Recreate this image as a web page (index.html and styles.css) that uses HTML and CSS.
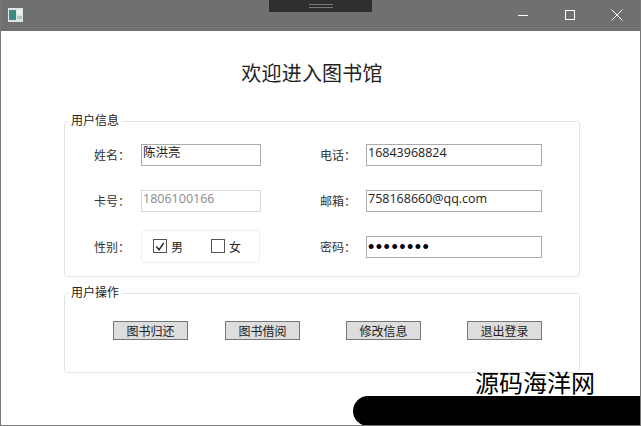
FILE: index.html
```html
<!DOCTYPE html>
<html lang="zh-CN">
<head>
<meta charset="utf-8">
<title>欢迎进入图书馆</title>
<link rel="stylesheet" href="styles.css">
</head>
<body>
<div class="window">
  <header class="titlebar">
    <svg class="app-icon" width="15" height="14" viewBox="0 0 15 14"><rect width="15" height="14" fill="#dfe6e4"/><rect x="1" y="2" width="7" height="10" fill="#3f8a80"/><rect x="9" y="2" width="5" height="4" fill="#f2f2f2"/><rect x="9" y="8" width="5" height="3" fill="#b9c4c2"/></svg>
    <div class="grip"><span class="grip-lines"></span></div>
    <div class="controls">
      <svg width="12" height="12" viewBox="0 0 12 12"><path d="M1 6.5h10" stroke="#fff" stroke-width="1"/></svg>
      <svg width="12" height="12" viewBox="0 0 12 12"><rect x="1.5" y="1.5" width="9" height="9" fill="none" stroke="#fff" stroke-width="1"/></svg>
      <svg width="12" height="12" viewBox="0 0 12 12"><path d="M.5.5l11 11M11.500.5l-11 11" stroke="#fff" stroke-width="1"/></svg>
    </div>
  </header>
  <main class="content">
    <h1 class="title">欢迎进入图书馆</h1>
    <fieldset class="group info">
      <legend>用户信息</legend>
      <div class="form">
        <div class="row">
          <label class="lbl">姓名：</label><div class="input">陈洪亮</div>
          <label class="lbl lbl-r">电话：</label><div class="input wide">16843968824</div>
        </div>
        <div class="row">
          <label class="lbl">卡号：</label><div class="input disabled">1806100166</div>
          <label class="lbl lbl-r">邮箱：</label><div class="input wide">758168660@qq.com</div>
        </div>
        <div class="row">
          <label class="lbl">性别：</label>
          <div class="gender">
            <span class="check"><span class="box"><svg width="13" height="13" viewBox="0 0 13 13"><path d="M2.500 6.500l3 3.500 5-7.500" fill="none" stroke="#222" stroke-width="1.500"/></svg></span>男</span>
            <span class="check"><span class="box"></span>女</span>
          </div>
          <label class="lbl lbl-r">密码：</label><div class="input wide pass">••••••••</div>
        </div>
      </div>
    </fieldset>
    <fieldset class="group ops">
      <legend>用户操作</legend>
      <div class="actions">
        <button class="btn">图书归还</button>
        <button class="btn">图书借阅</button>
        <button class="btn far">修改信息</button>
        <button class="btn far">退出登录</button>
      </div>
    </fieldset>
  </main>
  <div class="mask"></div>
  <div class="watermark">源码海洋网</div>
</div>
</body>
</html>
```
FILE: styles.css
```css
* { box-sizing: border-box; }
html, body { margin: 0; padding: 0; background: #fff; }
body { width: 641px; height: 426px; overflow: hidden; font-family: "Open Sans", "Noto Sans CJK SC", sans-serif; font-size: 12px; color: #222; }
.window { position: relative; width: 641px; height: 426px; display: flex; flex-direction: column; border: 1px solid #777; border-top: 0; overflow: hidden; }
.titlebar { height: 31px; flex: none; background: #707070; position: relative; display: flex; align-items: center; justify-content: space-between; padding: 0 0 0 8px; margin: 0 -1px; }
.app-icon { margin-top: -1px; }
.grip { position: absolute; left: 269px; top: 0; width: 103px; height: 12px; background: #2f2f2f; display: flex; justify-content: center; align-items: center; }
.grip-lines { width: 24px; height: 4px; border-top: 1px solid #777; border-bottom: 1px solid #777; }
.controls { display: flex; gap: 35px; padding-right: 18px; margin-top: -1px; }
.content { flex: 1; padding: 0 0 0 63px; }
.title { margin: 28px 0 0; width: 496px; font-size: 20px; font-weight: 400; line-height: 28px; text-align: center; letter-spacing: .2px; font-family: "Noto Sans CJK SC", sans-serif; color: #222; }
.group { width: 516px; margin: 0; padding: 0; border: 1px solid #e4e4e4; border-radius: 3px; }
.group legend { margin-left: 3px; padding: 0 3px 2px; font-size: 12px; line-height: 14px; font-family: "Noto Sans CJK SC", sans-serif; color: #222; }
.info { height: 164px; margin-top: 26px; }
.ops { height: 88px; margin-top: 8px; }
.form { display: flex; flex-direction: column; gap: 24px; padding: 15px 0 0 29px; }
.row { display: flex; align-items: center; height: 22px; }
.lbl { width: 47px; flex: none; margin-bottom: 2px; font-family: "Noto Sans CJK SC", sans-serif; color: #333; }
.lbl-r { width: 46px; margin-left: 59px; }
.input { width: 120px; height: 22px; border: 1px solid #ababab; padding: 0 1px; font-size: 12.500px; line-height: 16px; white-space: nowrap; }
.wide { width: 176px; }
.disabled { border-color: #d9d9d9; color: #8a8a8a; }
.pass { font-size: 18px; line-height: 20px; letter-spacing: 1.500px; color: #000; font-family: "Liberation Sans", sans-serif; }
.gender { width: 119px; height: 33px; margin: 0 1px 2px 0; border: 1px solid #eee; border-radius: 4px; display: flex; align-items: center; padding-left: 11px; gap: 19px; font-family: "Noto Sans CJK SC", sans-serif; }
.check { display: flex; align-items: center; gap: 4px; width: 39px; }
.box { width: 14px; height: 14px; flex: none; border: 1px solid #555; display: flex; align-items: center; justify-content: center; }
.actions { display: flex; padding: 20px 0 0 48px; gap: 37px; }
.btn { width: 75px; height: 19px; padding: 0; background: #dddddd; border: 1px solid #777; font: inherit; font-family: "Noto Sans CJK SC", sans-serif; color: #222; line-height: 16px; }
.far { margin-left: 9px; }
.mask { position: absolute; left: 352px; top: 396px; width: 300px; height: 30px; background: #000; border-radius: 15px 0 0 15px; }
.watermark { position: absolute; left: 474px; top: 365px; font-size: 24px; line-height: 34px; color: #000; font-family: "Noto Sans CJK SC", sans-serif; }
```
